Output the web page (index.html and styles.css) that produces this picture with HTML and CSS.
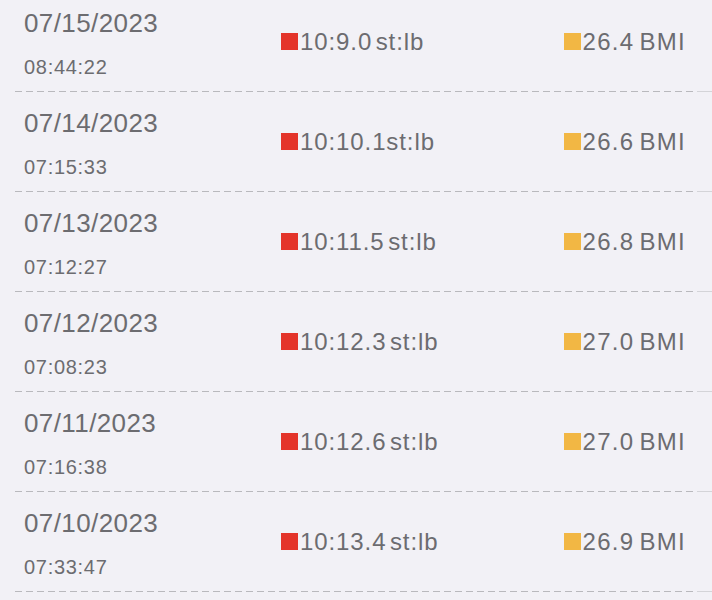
FILE: index.html
```html
<!DOCTYPE html>
<html lang="en">
<head>
  <meta charset="UTF-8">
  <meta name="viewport" content="width=device-width, initial-scale=1.0">
  <title>Weight History</title>
  <link rel="stylesheet" href="styles.css">
</head>
<body>
  <div class="history">

    <!-- one row per weigh-in -->
    <div class="entry">
      <div class="when">
        <div class="date">07/15/2023</div>
        <div class="time">08:44:22</div>
      </div>
      <div class="weight"><span class="mark red"></span>10:9.0 st:lb</div>
      <div class="bmi"><span class="mark yellow"></span>26.4 BMI</div>
    </div>
    <div class="sep"><div class="dashes"></div><div class="tail"></div></div>

    <div class="entry">
      <div class="when">
        <div class="date">07/14/2023</div>
        <div class="time">07:15:33</div>
      </div>
      <div class="weight"><span class="mark red"></span>10:10.1st:lb</div>
      <div class="bmi"><span class="mark yellow"></span>26.6 BMI</div>
    </div>
    <div class="sep"><div class="dashes"></div><div class="tail"></div></div>

    <div class="entry">
      <div class="when">
        <div class="date">07/13/2023</div>
        <div class="time">07:12:27</div>
      </div>
      <div class="weight"><span class="mark red"></span>10:11.5 st:lb</div>
      <div class="bmi"><span class="mark yellow"></span>26.8 BMI</div>
    </div>
    <div class="sep"><div class="dashes"></div><div class="tail"></div></div>

    <div class="entry">
      <div class="when">
        <div class="date">07/12/2023</div>
        <div class="time">07:08:23</div>
      </div>
      <div class="weight"><span class="mark red"></span>10:12.3 st:lb</div>
      <div class="bmi"><span class="mark yellow"></span>27.0 BMI</div>
    </div>
    <div class="sep"><div class="dashes"></div><div class="tail"></div></div>

    <div class="entry">
      <div class="when">
        <div class="date">07/11/2023</div>
        <div class="time">07:16:38</div>
      </div>
      <div class="weight"><span class="mark red"></span>10:12.6 st:lb</div>
      <div class="bmi"><span class="mark yellow"></span>27.0 BMI</div>
    </div>
    <div class="sep"><div class="dashes"></div><div class="tail"></div></div>

    <div class="entry">
      <div class="when">
        <div class="date">07/10/2023</div>
        <div class="time">07:33:47</div>
      </div>
      <div class="weight"><span class="mark red"></span>10:13.4 st:lb</div>
      <div class="bmi"><span class="mark yellow"></span>26.9 BMI</div>
    </div>
    <div class="sep"><div class="dashes"></div><div class="tail"></div></div>

  </div>
</body>
</html>
```

FILE: styles.css
```css
body {
  margin: 0;
  background-color: #f2f1f6;
  font-family: "Liberation Sans", Arial, sans-serif;
  color: #6c6c70;
  overflow: hidden;
}
.history {
  margin-top: -8px;
}
.entry {
  height: 99px;
  display: grid;
  grid-template-columns: 257px 1fr auto;
  align-items: center;
  padding: 0 26px 0 24px;
}
.when {
  align-self: start;
  padding-top: 16px;
}
.date {
  font-size: 26px;
  line-height: 30px;
  letter-spacing: 0.4px;
}
.time {
  font-size: 20px;
  line-height: 24px;
  margin-top: 17px;
  letter-spacing: 0.7px;
}
.weight,
.bmi {
  display: flex;
  align-items: center;
  font-size: 24px;
  line-height: 28px;
  letter-spacing: 0.9px;
  word-spacing: -4px;
}
.weight {
  margin-top: 1px;
}
.bmi {
  letter-spacing: 1.3px;
  word-spacing: -3px;
}
.mark {
  width: 17px;
  height: 17px;
  margin-right: 2px;
  margin-top: -1px;
}
.red {
  background-color: #e4342a;
}
.yellow {
  background-color: #f2b744;
}
.sep {
  display: flex;
  height: 1px;
  padding-left: 15px;
}
.dashes {
  flex: 1;
  background: repeating-linear-gradient(to right, #b9b9bd 0 7px, transparent 7px 11px);
}
.tail {
  width: 15px;
  background-color: #d4d4d8;
}
```
